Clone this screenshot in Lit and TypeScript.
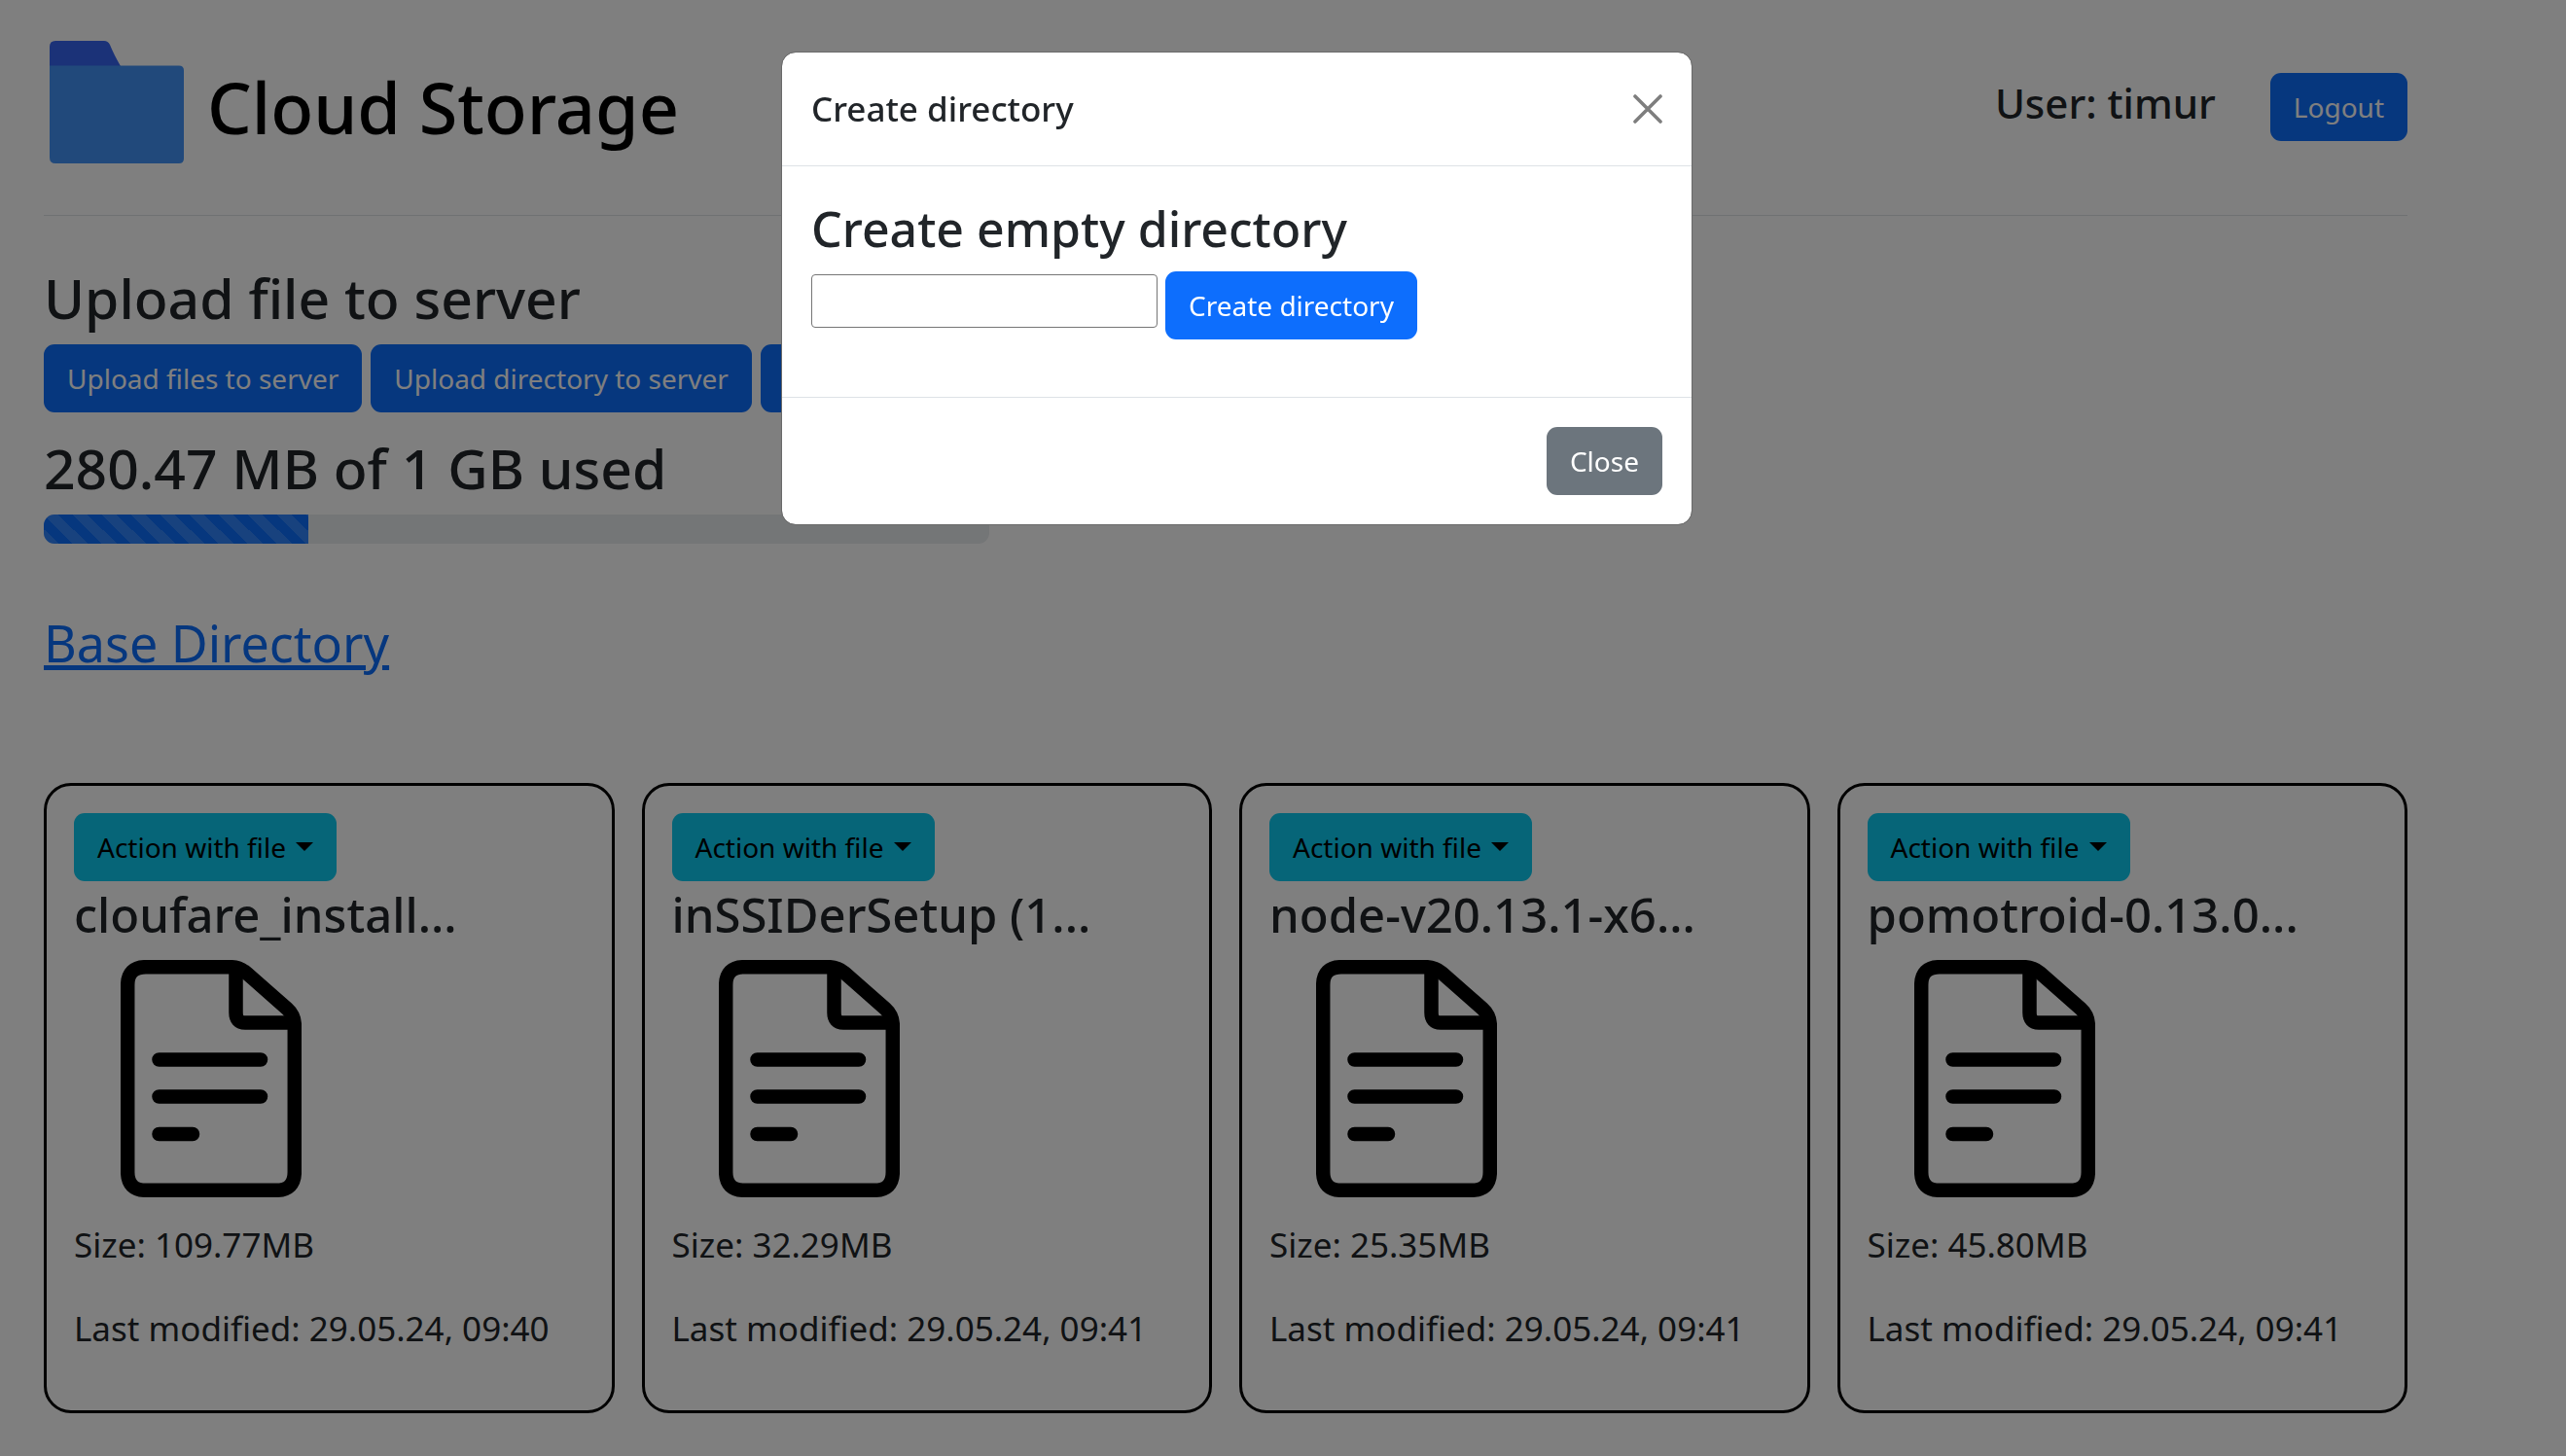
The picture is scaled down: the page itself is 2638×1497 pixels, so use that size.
import { LitElement, html, css } from "lit";
import { customElement, property, state } from "lit/decorators.js";

interface StoredFile {
  name: string;
  size: string;
  modified: string;
}

const buttonStyles = css`
  .btn {
    display: inline-flex;
    align-items: center;
    justify-content: center;
    height: 70px;
    padding: 0 24px;
    border: 0;
    border-radius: 11px;
    font: 400 28px/44px var(--font);
    white-space: nowrap;
    cursor: pointer;
  }
  .btn-primary {
    background: #0d6efd;
    color: #fff;
  }
  .btn-secondary {
    background: #6c757d;
    color: #fff;
  }
  .btn-info {
    background: #0dcaf0;
    color: #000;
  }
`;

@customElement("file-card")
class FileCard extends LitElement {
  @property({ attribute: false }) file!: StoredFile;

  static styles = [
    buttonStyles,
    css`
      :host {
        display: block;
        min-width: 0;
      }
      .card {
        display: flex;
        flex-direction: column;
        align-items: flex-start;
        padding: 28px 28px 56px;
        border: 3px solid #000;
        border-radius: 28px;
      }
      .caret {
        margin: 0 0 2px 10px;
        border-top: 9px solid currentColor;
        border-left: 9px solid transparent;
        border-right: 9px solid transparent;
      }
      .name {
        max-width: 100%;
        margin: 0 0 13px;
        font-size: 49px;
        font-weight: 500;
        line-height: 68px;
        white-space: nowrap;
      }
      .icon {
        width: 186px;
        height: 244px;
        margin: 0 0 21px 48px;
      }
      .meta {
        margin: 0;
        font-size: 35px;
        line-height: 56px;
      }
      .meta + .meta {
        margin-top: 30px;
      }
    `,
  ];

  render() {
    return html`
      <article class="card">
        <button class="btn btn-info" type="button" aria-haspopup="menu">
          Action with file<span class="caret"></span>
        </button>
        <h3 class="name">${this.file.name}</h3>
        <svg class="icon" viewBox="0 0 186 244" fill="none" stroke="#000" stroke-width="14.5" aria-hidden="true">
          <path d="M26 7.2H113Q122 7.2 129 13L171 50Q178.800 57 178.800 67V218Q178.800 236.800 160 236.800H26Q7.200 236.800 7.200 218V26Q7.200 7.200 26 7.200Z" />
          <path d="M118.500 10V54Q118.500 64.500 128 64.500H176" />
          <path d="M39.500 102.500H144M39.500 140.500H144M39.500 179H74" stroke-linecap="round" />
        </svg>
        <p class="meta">Size: ${this.file.size}</p>
        <p class="meta">Last modified: ${this.file.modified}</p>
      </article>
    `;
  }
}

@customElement("create-directory-dialog")
class CreateDirectoryDialog extends LitElement {
  static styles = [
    buttonStyles,
    css`
      :host {
        position: fixed;
        inset: 0;
        display: flex;
        align-items: flex-start;
        justify-content: center;
        padding: 53px 95px 53px 0;
        background: rgba(0, 0, 0, 0.5);
      }
      .modal {
        width: 100%;
        max-width: 935px;
        border: 1px solid #6a6a6a;
        border-radius: 15px;
        background: #fff;
        background-clip: padding-box;
      }
      .head {
        display: flex;
        align-items: center;
        justify-content: space-between;
        padding: 30px;
        border-bottom: 1px solid #dee2e6;
      }
      .title {
        margin: 0;
        font-size: 35px;
        font-weight: 500;
        line-height: 56px;
      }
      .dismiss {
        display: flex;
        padding: 0;
        border: 0;
        background: none;
        opacity: 0.5;
        cursor: pointer;
      }
      .dismiss svg {
        width: 30px;
        height: 30px;
      }
      .body {
        padding: 30px 30px 59px;
      }
      .heading {
        margin: 0 0 10px;
        font-size: 50px;
        font-weight: 500;
        line-height: 68px;
      }
      .form {
        display: flex;
        align-items: flex-start;
        gap: 8px;
      }
      .field {
        box-sizing: border-box;
        width: 356px;
        height: 55px;
        margin: 3px 0 0;
        padding: 2px 4px;
        border: 1px solid #767676;
        border-radius: 4px;
        background: #fff;
        font: 400 28px/44px var(--font);
      }
      .foot {
        display: flex;
        justify-content: flex-end;
        padding: 30px;
        border-top: 1px solid #dee2e6;
      }
    `,
  ];

  private close() {
    this.dispatchEvent(new CustomEvent("dismiss"));
  }

  render() {
    return html`
      <section class="modal" role="dialog" aria-modal="true" aria-labelledby="title">
        <header class="head">
          <h2 class="title" id="title">Create directory</h2>
          <button class="dismiss" type="button" aria-label="Close" @click=${this.close}>
            <svg viewBox="0 0 30 30" fill="none" stroke="#000" stroke-width="3.6" stroke-linecap="round" aria-hidden="true">
              <path d="M2 2L28 28M28 2L2 28" />
            </svg>
          </button>
        </header>
        <div class="body">
          <h3 class="heading" id="heading">Create empty directory</h3>
          <form class="form" @submit=${(e: Event) => e.preventDefault()}>
            <input class="field" type="text" name="directory" aria-labelledby="heading" />
            <button class="btn btn-primary" type="submit">Create directory</button>
          </form>
        </div>
        <footer class="foot">
          <button class="btn btn-secondary" type="button" @click=${this.close}>Close</button>
        </footer>
      </section>
    `;
  }
}

@customElement("app-root")
class AppRoot extends LitElement {
  @state() private dialogOpen = true;

  private files: StoredFile[] = [
    { name: "cloufare_install...", size: "109.77MB", modified: "29.05.24, 09:40" },
    { name: "inSSIDerSetup (1...", size: "32.29MB", modified: "29.05.24, 09:41" },
    { name: "node-v20.13.1-x6...", size: "25.35MB", modified: "29.05.24, 09:41" },
    { name: "pomotroid-0.13.0...", size: "45.80MB", modified: "29.05.24, 09:41" },
  ];

  private usedPercent = 28;

  static styles = [
    buttonStyles,
    css`
      :host {
        --font: "Segoe UI", "Noto Sans", "Open Sans", sans-serif;
        display: block;
        box-sizing: border-box;
        min-height: 100vh;
        padding: 0 163px 44px 45px;
        background: #fff;
        color: #212529;
        font-family: var(--font);
      }
      .header {
        display: flex;
        align-items: center;
        justify-content: space-between;
        padding: 42px 0 43px;
        border-bottom: 1px solid #dee2e6;
      }
      .brand {
        display: flex;
        align-items: center;
        gap: 24px;
        padding-left: 6px;
        color: #000;
        text-decoration: none;
      }
      .logo {
        width: 138px;
        height: 136px;
      }
      .brand-name {
        font-size: 72px;
        font-weight: 500;
        line-height: 96px;
      }
      .account {
        display: flex;
        align-items: center;
        gap: 56px;
      }
      .user {
        padding-bottom: 8px;
        font-size: 42px;
        font-weight: 500;
        line-height: 56px;
      }
      .section-title {
        margin: 0 0 16px;
        font-size: 57px;
        font-weight: 500;
        line-height: 64px;
      }
      .upload {
        padding-top: 52px;
      }
      .actions {
        display: flex;
        flex-wrap: wrap;
        gap: 9px;
        margin-bottom: 25px;
      }
      .progress {
        width: 40%;
        height: 30px;
        overflow: hidden;
        border-radius: 11px;
        background: #e9ecef;
      }
      .bar {
        height: 100%;
        background-color: #0d6efd;
        background-image: linear-gradient(
          45deg,
          rgba(255, 255, 255, 0.15) 25%,
          transparent 25%,
          transparent 50%,
          rgba(255, 255, 255, 0.15) 50%,
          rgba(255, 255, 255, 0.15) 75%,
          transparent 75%,
          transparent
        );
        background-size: 30px 30px;
      }
      .path {
        margin: 66px 0 108px;
        font-size: 52px;
        line-height: 72px;
      }
      .path a {
        color: #0d6efd;
        text-decoration-thickness: 5px;
      }
      .files {
        display: grid;
        grid-template-columns: repeat(4, minmax(0, 1fr));
        gap: 28px;
      }
    `,
  ];

  render() {
    return html`
      <header class="header">
        <a class="brand" href="#">
          <svg class="logo" viewBox="0 0 138 136" aria-hidden="true">
            <path d="M0 26V6Q0 0 6 0H56Q60 0 62 4Q66 14 73 26Z" fill="#3664f0" />
            <path d="M0 25.500H133Q138 25.500 138 30.500V121Q138 126 133 126H6Q0 126 0 120Z" fill="#4293f6" />
          </svg>
          <span class="brand-name">Cloud Storage</span>
        </a>
        <div class="account">
          <span class="user">User: timur</span>
          <button class="btn btn-primary" type="button">Logout</button>
        </div>
      </header>
      <main>
        <section class="upload">
          <h2 class="section-title">Upload file to server</h2>
          <div class="actions">
            <button class="btn btn-primary" type="button">Upload files to server</button>
            <button class="btn btn-primary" type="button">Upload directory to server</button>
            <button class="btn btn-primary" type="button" @click=${() => (this.dialogOpen = true)}>
              Create directory
            </button>
          </div>
          <h2 class="section-title">280.47 MB of 1 GB used</h2>
          <div
            class="progress"
            role="progressbar"
            aria-label="Storage used"
            aria-valuemin="0"
            aria-valuemax="100"
            aria-valuenow=${this.usedPercent}
          >
            <div class="bar" style="width: ${this.usedPercent}%"></div>
          </div>
        </section>
        <nav class="path"><a href="#">Base Directory</a></nav>
        <section class="files">
          ${this.files.map((file) => html`<file-card .file=${file}></file-card>`)}
        </section>
      </main>
      ${this.dialogOpen
        ? html`<create-directory-dialog @dismiss=${() => (this.dialogOpen = false)}></create-directory-dialog>`
        : null}
    `;
  }
}
